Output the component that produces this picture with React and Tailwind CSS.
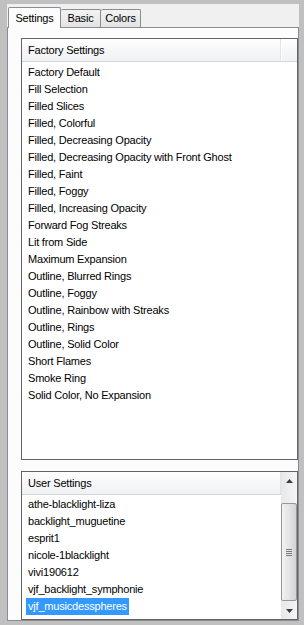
const factoryItems = [
  'Factory Default',
  'Fill Selection',
  'Filled Slices',
  'Filled, Colorful',
  'Filled, Decreasing Opacity',
  'Filled, Decreasing Opacity with Front Ghost',
  'Filled, Faint',
  'Filled, Foggy',
  'Filled, Increasing Opacity',
  'Forward Fog Streaks',
  'Lit from Side',
  'Maximum Expansion',
  'Outline, Blurred Rings',
  'Outline, Foggy',
  'Outline, Rainbow with Streaks',
  'Outline, Rings',
  'Outline, Solid Color',
  'Short Flames',
  'Smoke Ring',
  'Solid Color, No Expansion',
];

const userItems = [
  'athe-blacklight-liza',
  'backlight_muguetine',
  'esprit1',
  'nicole-1blacklight',
  'vivi190612',
  'vjf_backlight_symphonie',
  'vjf_musicdesspheres',
];

function Arrow({ down }) {
  return (
    <svg width="7" height="4" viewBox="0 0 7 4">
      {down ? (
        <path d="M0 0 H7 L3.5 4 Z" fill="#3c3c3c" />
      ) : (
        <path d="M0 4 H7 L3.5 0 Z" fill="#3c3c3c" />
      )}
    </svg>
  );
}

function ListHeader({ title, filler }) {
  return (
    <div className="flex h-[23px] shrink-0 border-b border-[#d5d5d5] bg-linear-to-b from-[#ffffff] via-[#f6f7f9] to-[#f1f2f4]">
      <div className="flex w-[259px] items-center border-r border-[#e3e4e6] pl-[6px]">{title}</div>
      {filler && <div className="flex-1 border-l border-white" />}
    </div>
  );
}

function Row({ label, selected }) {
  return (
    <div className="h-[17px] pl-[4px]">
      <span
        className={`inline-block h-[17px] px-[2px] leading-[17px] whitespace-nowrap ${
          selected ? 'bg-[#3399ff] text-white' : ''
        }`}
      >
        {label}
      </span>
    </div>
  );
}

export default function App() {
  return (
    <div className="h-[625px] w-[304px] bg-[#c0c0c0] pt-[4px] pr-[5px] pb-[4px] pl-[7px] font-['Liberation_Sans',Arial,sans-serif] text-[11px] tracking-[-0.2px] text-black">
      <div className="flex h-full flex-col bg-[#f0f0f0]">
        {/* tabs */}
        <div className="flex h-[23px] shrink-0 items-end pl-[1px]">
          <div className="relative z-10 -mb-px flex h-[21px] w-[53px] items-center justify-center rounded-t-[2px] border-x border-t border-[#898c95] bg-[#fcfcfc]">
            Settings
          </div>
          <div className="flex h-[18px] w-[40px] items-center justify-center rounded-t-[2px] border-t border-r border-[#898c95] bg-linear-to-b from-[#f3f3f3] to-[#e3e3e3]">
            Basic
          </div>
          <div className="flex h-[18px] w-[40px] items-center justify-center rounded-t-[2px] border-t border-r border-[#898c95] bg-linear-to-b from-[#f3f3f3] to-[#e3e3e3]">
            Colors
          </div>
        </div>

        {/* tab page */}
        <div className="flex flex-1 flex-col border border-[#898c95] bg-[#fcfcfc] pt-[10px] pl-[13px]">
          <div className="flex h-[422px] shrink-0 flex-col border border-[#646464] bg-white">
            <ListHeader title="Factory Settings" filler />
            <div className="pt-[2px]">
              {factoryItems.map((item) => (
                <Row key={item} label={item} />
              ))}
            </div>
          </div>

          <div className="mt-[11px] flex h-[149px] border border-[#646464] bg-white">
            <div className="flex w-[259px] flex-col">
              <ListHeader title="User Settings" />
              <div className="pt-[1px]">
                {userItems.map((item, i) => (
                  <Row key={item} label={item} selected={i === userItems.length - 1} />
                ))}
              </div>
            </div>

            {/* scrollbar */}
            <div className="flex w-[16px] flex-col bg-linear-to-r from-[#e8e8e8] to-[#f4f4f4]">
              <div className="flex h-[17px] items-center justify-center">
                <Arrow />
              </div>
              <div className="h-[14px]" />
              <div className="flex h-[98px] flex-col items-center justify-center rounded-[2px] border border-[#979797] bg-linear-to-r from-[#f2f2f2] via-[#e4e4e4] to-[#d2d2d2]">
                <div className="flex flex-col gap-[1px]">
                  <div className="h-px w-[6px] bg-[#7b7b7b]" />
                  <div className="h-px w-[6px] bg-[#7b7b7b]" />
                  <div className="h-px w-[6px] bg-[#7b7b7b]" />
                  <div className="h-px w-[6px] bg-[#7b7b7b]" />
                </div>
              </div>
              <div className="h-[1px]" />
              <div className="flex h-[17px] items-center justify-center">
                <Arrow down />
              </div>
            </div>
          </div>
        </div>
      </div>
    </div>
  );
}
